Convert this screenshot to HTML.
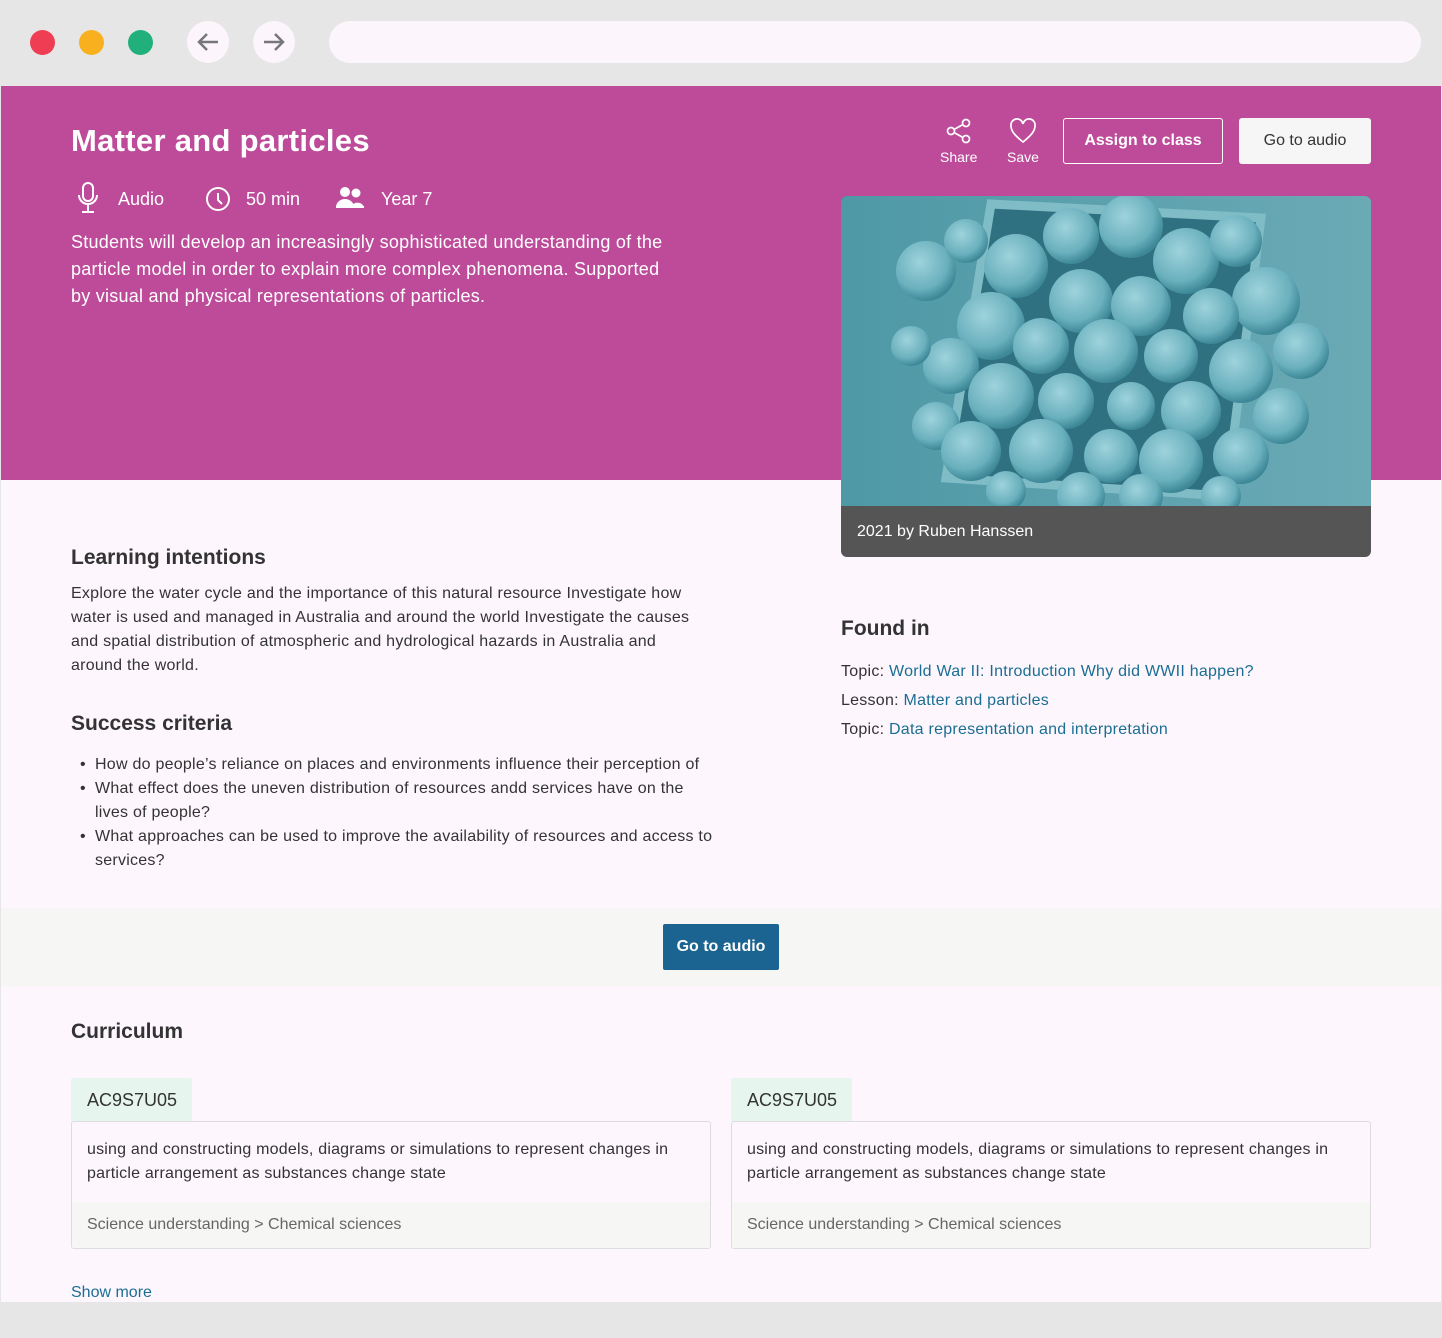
<!DOCTYPE html>
<html><head><meta charset="utf-8"><style>
*{margin:0;padding:0;box-sizing:border-box}
body{width:1442px;height:1338px;background:#e6e6e6;font-family:"Liberation Sans",sans-serif;position:relative;overflow:hidden;color:#333}
.abs{position:absolute}
.dot{position:absolute;top:30px;width:25px;height:25px;border-radius:50%}
.nav{position:absolute;top:21px;width:42px;height:42px;border-radius:50%;background:#fcf5fc}
.page{position:absolute;left:1px;top:86px;width:1440px;height:1216px;background:#fdf6fd;overflow:hidden}
.hero{position:absolute;left:0;top:0;width:1440px;height:394px;background:#bd4b9a}
.w{color:#fff}
h2{font-size:21px;font-weight:bold;color:#333;position:absolute}
.p{font-size:16px;letter-spacing:0.25px;line-height:24px;color:#333;position:absolute;white-space:nowrap}
a{color:#1b6e93;text-decoration:none}
.tag{position:absolute;background:#e6f6ee;height:44px;width:121px;font-size:18px;padding:12px 16px;color:#333;border-radius:2px 2px 0 0}
.card{position:absolute;width:640px;height:128px;border:1px solid #ddd;border-radius:3px;background:#fdf6fd;overflow:hidden}
.card .t{padding:16px 15px 0;font-size:16px;letter-spacing:0.2px;line-height:24px;color:#333;height:80px}
.card .b{background:#f6f6f5;height:48px;padding:14px 15px;font-size:16px;color:#666}
</style></head><body>
<div class="dot" style="left:30px;background:#ef3d54"></div>
<div class="dot" style="left:79px;background:#f8b01e"></div>
<div class="dot" style="left:128px;background:#21b07c"></div>
<div class="nav" style="left:187px"><svg width="42" height="42"><path d="M31 21H12M20 13l-8 8 8 8" stroke="#777" stroke-width="2.5" fill="none"/></svg></div>
<div class="nav" style="left:253px"><svg width="42" height="42"><path d="M11 21h19M22 13l8 8-8 8" stroke="#777" stroke-width="2.5" fill="none"/></svg></div>
<div class="abs" style="left:329px;top:21px;width:1092px;height:42px;border-radius:21px;background:#fcf5fc"></div>

<div class="page">
<div class="hero">
 <div class="abs w" style="left:70px;top:37px;font-size:31px;font-weight:bold;letter-spacing:0.3px">Matter and particles</div>
 <svg class="abs" style="left:74px;top:96px" width="26" height="32"><rect x="8" y="1" width="10" height="18" rx="5" fill="none" stroke="#fff" stroke-width="2"/><path d="M4 13a9 9 0 0 0 18 0M13 22v7M7 30h12" stroke="#fff" stroke-width="2" fill="none"/></svg>
 <div class="abs w" style="left:117px;top:103px;font-size:18px">Audio</div>
 <svg class="abs" style="left:204px;top:100px" width="26" height="26"><circle cx="13" cy="13" r="11" fill="none" stroke="#fff" stroke-width="2"/><path d="M13 7v7l4 4" stroke="#fff" stroke-width="2" fill="none"/></svg>
 <div class="abs w" style="left:245px;top:103px;font-size:18px">50 min</div>
 <svg class="abs" style="left:334px;top:100px" width="30" height="24"><circle cx="10" cy="6" r="5" fill="#fff"/><circle cx="21" cy="7" r="4.5" fill="#fff"/><path d="M1 21a9 8 0 0 1 18 0zM16 21a7 7 0 0 1 13 0z" fill="#fff"/><path d="M1 21h28" stroke="#fff" stroke-width="2"/></svg>
 <div class="abs w" style="left:380px;top:103px;font-size:18px">Year 7</div>
 <div class="abs w" style="left:70px;top:143px;font-size:18px;letter-spacing:0.25px;line-height:27px;white-space:nowrap">Students will develop an increasingly sophisticated understanding of the<br>particle model in order to explain more complex phenomena. Supported<br>by visual and physical representations of particles.</div>
 <svg class="abs" style="left:945px;top:32px" width="28" height="28"><circle cx="20" cy="5" r="3.5" fill="none" stroke="#fff" stroke-width="1.7"/><circle cx="5" cy="13" r="3.5" fill="none" stroke="#fff" stroke-width="1.7"/><circle cx="20" cy="21" r="3.5" fill="none" stroke="#fff" stroke-width="1.7"/><path d="M8 11.5l9-5M8 14.5l9 5" stroke="#fff" stroke-width="1.7"/></svg>
 <div class="abs w" style="left:939px;top:63px;font-size:14px">Share</div>
 <svg class="abs" style="left:1008px;top:32px" width="28" height="26"><path d="M14 24C4 16 2 12 2 8a6 6 0 0 1 12-2 6 6 0 0 1 12 2c0 4-2 8-12 16z" fill="none" stroke="#fff" stroke-width="1.7"/></svg>
 <div class="abs w" style="left:1006px;top:63px;font-size:14px">Save</div>
 <div class="abs w" style="left:1062px;top:32px;width:160px;height:46px;border:1.5px solid #fff;border-radius:3px;text-align:center;line-height:43px;font-size:16px;font-weight:bold">Assign to class</div>
 <div class="abs" style="left:1238px;top:32px;width:132px;height:46px;background:#f6f6f6;border-radius:3px;text-align:center;line-height:46px;font-size:16px;color:#333">Go to audio</div>
</div>
<div class="abs" style="left:840px;top:110px;width:530px;height:361px;border-radius:6px;overflow:hidden;background:#555">
<svg width="530" height="310" style="display:block"><defs><radialGradient id="g" cx="0.4" cy="0.35" r="0.65"><stop offset="0" stop-color="#9ed3dc"/><stop offset="0.7" stop-color="#6ab0bd"/><stop offset="1" stop-color="#3d8797"/></radialGradient><linearGradient id="bg" x1="0" x2="1"><stop offset="0" stop-color="#4f98a6"/><stop offset="1" stop-color="#6aaab5"/></linearGradient></defs>
<rect width="530" height="310" fill="url(#bg)"/>
<path d="M150 8L420 22 385 300 105 282z" fill="#2f7181" stroke="#7fbcc6" stroke-width="9"/>
<g fill="url(#g)">
<circle cx="85" cy="75" r="30"/><circle cx="125" cy="45" r="22"/><circle cx="175" cy="70" r="32"/><circle cx="230" cy="40" r="28"/><circle cx="290" cy="30" r="32"/><circle cx="345" cy="65" r="33"/><circle cx="395" cy="45" r="26"/><circle cx="425" cy="105" r="34"/><circle cx="460" cy="155" r="28"/><circle cx="240" cy="105" r="32"/><circle cx="300" cy="110" r="30"/><circle cx="370" cy="120" r="28"/><circle cx="150" cy="130" r="34"/><circle cx="110" cy="170" r="28"/><circle cx="70" cy="150" r="20"/><circle cx="200" cy="150" r="28"/><circle cx="265" cy="155" r="32"/><circle cx="330" cy="160" r="27"/><circle cx="400" cy="175" r="32"/><circle cx="440" cy="220" r="28"/><circle cx="160" cy="200" r="33"/><circle cx="225" cy="205" r="28"/><circle cx="290" cy="210" r="24"/><circle cx="350" cy="215" r="30"/><circle cx="95" cy="230" r="24"/><circle cx="130" cy="255" r="30"/><circle cx="200" cy="255" r="32"/><circle cx="270" cy="260" r="27"/><circle cx="330" cy="265" r="32"/><circle cx="400" cy="260" r="28"/><circle cx="240" cy="300" r="24"/><circle cx="300" cy="300" r="22"/><circle cx="165" cy="295" r="20"/><circle cx="380" cy="300" r="20"/></g>
</svg>
<div class="abs" style="left:16px;top:327px;color:#fff;font-size:16px">2021 by Ruben Hanssen</div>
</div>

<h2 style="left:70px;top:460px">Learning intentions</h2>
<div class="p" style="left:70px;top:496px">Explore the water cycle and the importance of this natural resource Investigate how<br>water is used and managed in Australia and around the world Investigate the causes<br>and spatial distribution of atmospheric and hydrological hazards in Australia and<br>around the world.</div>
<h2 style="left:70px;top:626px">Success criteria</h2>
<div class="p" style="left:94px;top:667px">
<div style="position:relative"><span style="position:absolute;left:-15px">•</span>How do people’s reliance on places and environments influence their perception of</div>
<div style="position:relative"><span style="position:absolute;left:-15px">•</span>What effect does the uneven distribution of resources andd services have on the<br>lives of people?</div>
<div style="position:relative"><span style="position:absolute;left:-15px">•</span>What approaches can be used to improve the availability of resources and access to<br>services?</div>
</div>
<h2 style="left:840px;top:531px">Found in</h2>
<div class="p" style="left:840px;top:571px;line-height:29px">Topic: <a>World War II: Introduction Why did WWII happen?</a><br>Lesson: <a>Matter and particles</a><br>Topic: <a>Data representation and interpretation</a></div>

<div class="abs" style="left:0;top:822px;width:1440px;height:78px;background:#f6f6f5"></div>
<div class="abs" style="left:662px;top:838px;width:116px;height:46px;background:#1b6390;color:#fff;border-radius:2px;text-align:center;line-height:46px;font-size:16px;font-weight:bold">Go to audio</div>

<h2 style="left:70px;top:934px">Curriculum</h2>
<div class="tag" style="left:70px;top:992px">AC9S7U05</div>
<div class="card" style="left:70px;top:1035px"><div class="t">using and constructing models, diagrams or simulations to represent changes in particle arrangement as substances change state</div><div class="b">Science understanding &gt; Chemical sciences</div></div>
<div class="tag" style="left:730px;top:992px">AC9S7U05</div>
<div class="card" style="left:730px;top:1035px"><div class="t">using and constructing models, diagrams or simulations to represent changes in particle arrangement as substances change state</div><div class="b">Science understanding &gt; Chemical sciences</div></div>
<div class="abs" style="left:70px;top:1198px;font-size:16px;color:#1b6e93">Show more</div>
</div>
</body></html>
